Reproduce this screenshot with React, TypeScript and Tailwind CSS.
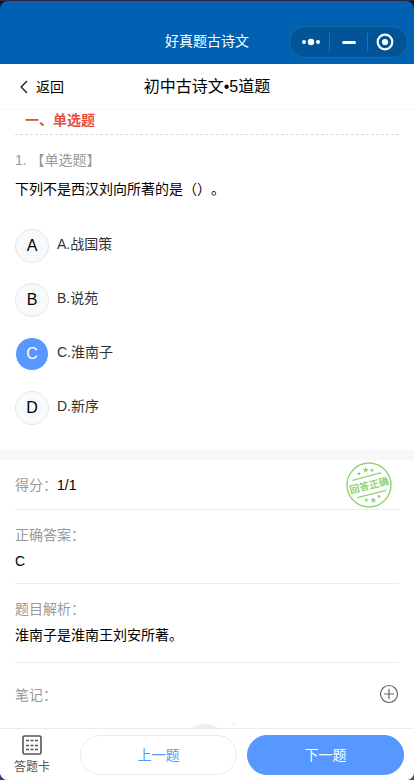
import { useState } from "react";

const options = [
  { key: "A", text: "A.战国策" },
  { key: "B", text: "B.说苑" },
  { key: "C", text: "C.淮南子" },
  { key: "D", text: "D.新序" },
];

function Capsule() {
  return (
    <div className="absolute top-[25px] right-[6px] flex h-8 w-[119px] items-center rounded-full border border-[#1d68ab] bg-[#005497]">
      <button type="button" aria-label="更多" className="flex h-full w-[39px] items-center justify-center pl-[3px]">
        <svg width="20" height="8" viewBox="0 0 20 8" fill="#fff">
          <circle cx="3" cy="4" r="2" />
          <circle cx="10" cy="4" r="3.2" />
          <circle cx="17" cy="4" r="2" />
        </svg>
      </button>
      <span className="h-[18px] w-px bg-[#2a6eaa]" />
      <button type="button" aria-label="最小化" className="flex h-full w-[37px] items-center justify-center">
        <span className="h-[3px] w-[14px] rounded-full bg-white" />
      </button>
      <span className="h-[18px] w-px bg-[#2a6eaa]" />
      <button type="button" aria-label="关闭" className="flex h-full w-[39px] items-center justify-center pr-[5px]">
        <svg width="18" height="18" viewBox="0 0 18 18">
          <circle cx="9" cy="9" r="7.3" fill="none" stroke="#fff" strokeWidth="2.2" />
          <circle cx="9" cy="9" r="3.1" fill="#fff" />
        </svg>
      </button>
    </div>
  );
}

const starPath =
  "M0-3 L.8-1 L2.9-.9 L1.2.4 L1.8 2.4 L0 1.2 L-1.8 2.4 L-1.2.4 L-2.9-.9 L-.8-1Z";

function CorrectStamp() {
  return (
    <svg width="46" height="46" viewBox="0 0 46 46" role="img" aria-label="回答正确" className="mr-[7px]">
      <circle cx="23" cy="23" r="22" fill="none" stroke="#8fd473" strokeWidth="1.4" />
      <path d="M6.5 18.3L35.3 10.6M11.3 35.7L40.3 28.3" stroke="#8fd473" strokeWidth="1.3" />
      <g fill="#8fd473">
        <path d={starPath} transform="translate(13 11.7) scale(.8)" />
        <path d={starPath} transform="translate(19.7 8) scale(1.1)" />
        <path d={starPath} transform="translate(25.9 8.3) scale(.8)" />
        <path d={starPath} transform="translate(20.3 38) scale(.8)" />
        <path d={starPath} transform="translate(27.3 38.3) scale(1.1)" />
        <path d={starPath} transform="translate(33 34.5) scale(.8)" />
        <text x="23" y="27" textAnchor="middle" fontSize="10" fontWeight="700" transform="rotate(-14 23 23)">
          回答正确
        </text>
      </g>
    </svg>
  );
}

function CardIcon() {
  return (
    <svg width="20" height="20" viewBox="0 0 20 20" fill="none" stroke="#55555a">
      <rect x="1" y="1" width="18" height="18" rx="1.5" strokeWidth="1.6" />
      <path d="M4 5.5h3M8.5 5.5h3M13 5.5h3M4 10.5h3M8.5 10.5h3M13 10.5h3M4 14.5h3M8.5 14.5h3M13 14.5h3" strokeWidth="1.4" />
    </svg>
  );
}

export default function App() {
  const [selected, setSelected] = useState("C");

  return (
    <div className="bg-gradient-to-r from-[#4b2a86] to-[#7b2f86] font-['Liberation_Sans','Noto_Sans_CJK_SC',sans-serif] text-sm text-black">
      <div className="flex h-screen flex-col overflow-hidden rounded-b-lg bg-white">
        <header className="shrink-0 border-t border-[#2a2742] bg-[#15122c]">
          <div className="relative flex h-[63px] items-center justify-center rounded-t-lg bg-[#0061b2] pt-4 text-white">
            <h1 className="text-sm">好真题古诗文</h1>
            <Capsule />
          </div>
        </header>

        <nav className="relative flex h-[46px] shrink-0 items-center justify-center border-b border-[#f7f7f7]">
          <button type="button" className="absolute left-5 flex items-center gap-2">
            <svg width="8" height="14" viewBox="0 0 8 14" fill="none" stroke="#222" strokeWidth="1.4">
              <path d="M7 1L1.2 7L7 13" />
            </svg>
            返回
          </button>
          <h2 className="text-base">初中古诗文•5道题</h2>
        </nav>

        <main className="min-h-0 flex-1 overflow-hidden">
          <section className="px-[15px] pb-[25px]">
            <h3 className="border-b border-dashed border-[#dcdcdc] pb-1 pl-[10px] leading-5 font-bold text-[#e84c3d]">
              一、单选题
            </h3>
            <p className="pt-[11px] leading-[29px] text-[#999]">1. 【单选题】</p>
            <fieldset>
              <legend className="leading-[29px] [text-spacing-trim:space-all]">下列不是西汉刘向所著的是（）。</legend>
              <div className="mt-[25px] flex flex-col gap-5">
                {options.map((o) => (
                  <label key={o.key} className="flex h-[34px] cursor-pointer items-center gap-2">
                    <input
                      type="radio"
                      name="answer"
                      value={o.key}
                      checked={selected === o.key}
                      onChange={() => setSelected(o.key)}
                      className="peer sr-only"
                    />
                    <span className="flex size-[34px] items-center justify-center rounded-full border border-[#e4e6ea] bg-[#f8f9fb] text-base peer-checked:border-white peer-checked:bg-[#5698ff] peer-checked:text-white">
                      {o.key}
                    </span>
                    <span className="pb-1 text-[#333]">{o.text}</span>
                  </label>
                ))}
              </div>
            </fieldset>
          </section>

          <div className="h-[10px] bg-[#f7f7f7]" />

          <div className="px-[15px]">
            <section className="flex h-[50px] items-center justify-between border-b border-[#ebebeb]">
              <p>
                <span className="text-[#999]">得分：</span>1/1
              </p>
              <CorrectStamp />
            </section>
            <section className="border-b border-[#ebebeb] pt-3 pb-[9px] leading-[26px]">
              <h4 className="text-[#999]">正确答案：</h4>
              <p>C</p>
            </section>
            <section className="border-b border-[#ebebeb] pt-3 pb-[14px] leading-[26px]">
              <h4 className="text-[#999]">题目解析：</h4>
              <p>淮南子是淮南王刘安所著。</p>
            </section>
            <section className="flex items-center justify-between pt-[19px] leading-[26px]">
              <h4 className="text-[#999]">笔记：</h4>
              <button type="button" aria-label="添加笔记" className="pb-[2px]">
                <svg width="20" height="20" viewBox="0 0 20 20" fill="none" stroke="#666" strokeWidth="1.2">
                  <circle cx="10" cy="10" r="8.5" />
                  <path d="M10 5v10M5 10h10" />
                </svg>
              </button>
            </section>
            <svg width="70" height="50" viewBox="0 0 70 50" fill="#e9eef8" className="mx-auto mt-[14px]">
              <circle cx="33" cy="24" r="22" />
              <circle cx="62" cy="2" r="1.2" />
            </svg>
          </div>
        </main>

        <footer className="z-10 flex h-[52px] shrink-0 items-center gap-[10px] border-t border-[#ebebeb] bg-white pr-[10px]">
          <button type="button" className="flex w-[70px] flex-col items-center gap-1 pr-[6px] text-xs leading-4 text-[#55555a]">
            <CardIcon />
            答题卡
          </button>
          <button type="button" className="h-10 flex-1 basis-0 rounded-full border border-[#ebebeb] bg-white text-[#5698ff]">
            上一题
          </button>
          <button type="button" className="h-10 flex-1 basis-0 rounded-full border border-[#5698ff] bg-[#5698ff] text-white">
            下一题
          </button>
        </footer>
      </div>
    </div>
  );
}
